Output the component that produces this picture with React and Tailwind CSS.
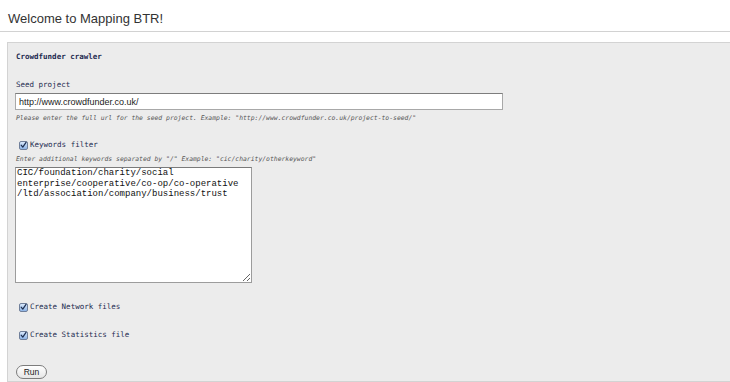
import React from 'react';

const mono = { fontFamily: '"DejaVu Sans Mono", monospace' };

const Check = () => (
    <span className="inline-flex w-[9px] h-[9px] shrink-0 items-center justify-center rounded-[2px] border border-[#6f7f9a] bg-gradient-to-b from-[#d9e8fb] to-[#8db4e6]">
        <svg width="8" height="8" viewBox="0 0 8 8">
            <path d="M1.3 4.2 L3.2 6.4 L6.9 0.9" fill="none" stroke="#1d2f52" strokeWidth="1.4" strokeLinecap="round" strokeLinejoin="round" />
        </svg>
    </span>
);

const CheckRow = ({ label, className }) => (
    <div className={`flex items-center h-[10px] pl-[3px] ${className}`}>
        <Check />
        <span className="ml-[2px] text-[7.5px] leading-[10px] text-[#1c2a4f]" style={mono}>{label}</span>
    </div>
);

const keywords = 'CIC/foundation/charity/social\nenterprise/cooperative/co-op/co-operative\n/ltd/association/company/business/trust';

const App = () => {
    return (
        <div className="w-[730px] h-[382px] overflow-hidden bg-white">
            <div className="h-[32px] border-b border-[#d2d2d2] pl-[8px] pt-[11px]">
                <h1 className="text-[13px] leading-[16px] text-[#333]" style={{ fontFamily: '"Liberation Sans", Arial, sans-serif' }}>
                    Welcome to Mapping BTR!
                </h1>
            </div>

            <div className="mt-[10px] ml-[7px] w-[740px] h-[340px] border border-[#d3d3d3] bg-[#ececec] pl-[8px] pt-[9px] flex flex-col">
                <div className="h-[10px] text-[7.5px] leading-[10px] font-bold text-[#1c2a4f]" style={mono}>Crowdfunder crawler</div>

                <div className="mt-[18px] h-[10px] text-[7.5px] leading-[10px] text-[#1c2a4f]" style={mono}>Seed project</div>
                <input
                    type="text"
                    readOnly
                    defaultValue="http://www.crowdfunder.co.uk/"
                    className="mt-[3px] ml-[-1px] w-[488px] h-[17px] border border-[#a8a8a8] border-t-[#7d7d7d] bg-white px-[3px] text-[9px] text-[#222] outline-none"
                    style={{ fontFamily: '"Liberation Sans", Arial, sans-serif' }}
                />
                <div className="mt-[4px] h-[8px] text-[6.4px] leading-[8px] italic text-[#555]" style={mono}>
                    Please enter the full url for the seed project. Example: "http://www.crowdfunder.co.uk/project-to-seed/"
                </div>

                <CheckRow label="Keywords filter" className="mt-[18px]" />
                <div className="mt-[5px] h-[8px] text-[6.4px] leading-[8px] italic text-[#555]" style={mono}>
                    Enter additional keywords separated by "/" Example: "cic/charity/otherkeyword"
                </div>
                <textarea
                    readOnly
                    defaultValue={keywords}
                    className="mt-[4px] ml-[-1px] w-[237px] h-[116px] border border-[#9c9c9c] border-t-[#7a7a7a] bg-white px-[1px] py-0 text-[9px] leading-[10.5px] text-[#111] outline-none resize"
                    style={{ fontFamily: '"Liberation Mono", "Courier New", monospace' }}
                />

                <CheckRow label="Create Network files" className="mt-[19px]" />
                <CheckRow label="Create Statistics file" className="mt-[18px]" />

                <div className="mt-[17px]">
                    <button
                        className="w-[31px] h-[14px] rounded-full border border-[#7c7c7c] bg-gradient-to-b from-white to-[#e6e6e6] text-[8.5px] leading-[12px] text-[#222]"
                        style={{ fontFamily: '"Liberation Sans", Arial, sans-serif' }}
                    >
                        Run
                    </button>
                </div>
            </div>
        </div>
    );
};

export default App;
